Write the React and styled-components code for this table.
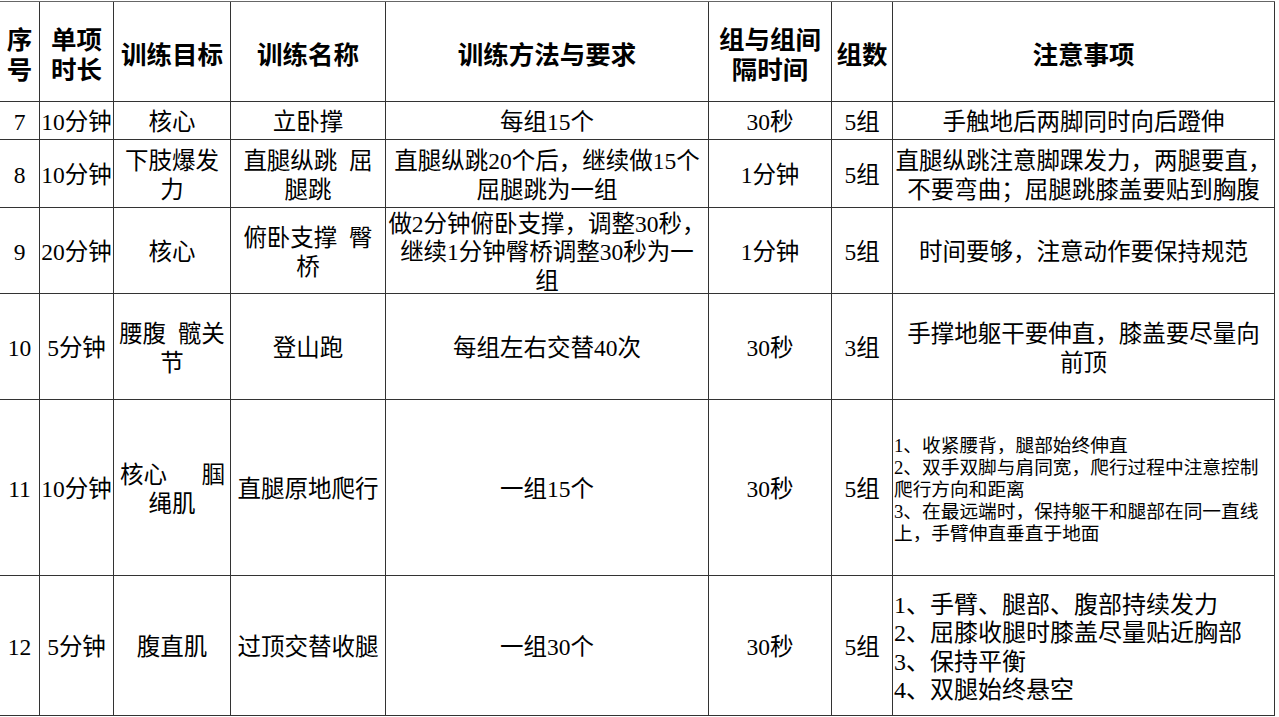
import styled, { createGlobalStyle } from "styled-components";

const GlobalStyle = createGlobalStyle`
  html, body {
    margin: 0;
    padding: 0;
    background: #fff;
  }
  body {
    font-family: "Liberation Serif", "Noto Sans CJK SC", serif;
    color: #000;
  }
`;

const Sheet = styled.div`
  display: grid;
  grid-template-columns: 40px 74px 117px 155px 323px 123px 61px 382px;
  grid-template-rows: 100px 38px 68px 86px 106px 176px 140px;
  width: 1275px;
  margin-top: 1px;
  border-top: 1px solid #666;
`;

const Cell = styled.div`
  box-sizing: border-box;
  border-right: 1px solid #333;
  border-bottom: 1px solid #333;
  display: flex;
  flex-direction: column;
  justify-content: center;
  align-items: ${(p) => (p.$left ? "flex-start" : "center")};
  text-align: ${(p) => (p.$left ? "left" : "center")};
  padding: 4px 0 0 ${(p) => (p.$left ? "1px" : "0")};
  font-size: ${(p) => p.$size || 23.5}px;
  line-height: ${(p) => p.$lh || 28.5}px;
  white-space: nowrap;
`;

const HeadCell = styled(Cell)`
  padding-top: 2px;
  font-family: "Noto Sans CJK SC", sans-serif;
  font-weight: 700;
  font-size: 25.5px;
  line-height: 30px;
`;

const Line = styled.div``;

const Spread = styled.div`
  align-self: stretch;
  display: flex;
  justify-content: space-between;
  padding: 0 5px 0 6px;
`;

const headers = [
  ["序", "号"],
  ["单项", "时长"],
  ["训练目标"],
  ["训练名称"],
  ["训练方法与要求"],
  ["组与组间", "隔时间"],
  ["组数"],
  ["注意事项"],
];

const rows = [
  {
    no: "7",
    time: "10分钟",
    target: ["核心"],
    name: ["立卧撑"],
    method: ["每组15个"],
    rest: "30秒",
    sets: "5组",
    notes: ["手触地后两脚同时向后蹬伸"],
  },
  {
    no: "8",
    time: "10分钟",
    target: ["下肢爆发", "力"],
    name: ["直腿纵跳\u2002屈", "腿跳"],
    method: ["直腿纵跳20个后，继续做15个", "屈腿跳为一组"],
    rest: "1分钟",
    sets: "5组",
    notes: ["直腿纵跳注意脚踝发力，两腿要直，", "不要弯曲；屈腿跳膝盖要贴到胸腹"],
  },
  {
    no: "9",
    time: "20分钟",
    target: ["核心"],
    name: ["俯卧支撑\u2002臀", "桥"],
    method: ["做2分钟俯卧支撑，调整30秒，", "继续1分钟臀桥调整30秒为一", "组"],
    rest: "1分钟",
    sets: "5组",
    notes: ["时间要够，注意动作要保持规范"],
  },
  {
    no: "10",
    time: "5分钟",
    target: ["腰腹\u2002髋关", "节"],
    name: ["登山跑"],
    method: ["每组左右交替40次"],
    rest: "30秒",
    sets: "3组",
    notes: ["手撑地躯干要伸直，膝盖要尽量向", "前顶"],
  },
  {
    no: "11",
    time: "10分钟",
    target: ["核心|腘", "绳肌"],
    name: ["直腿原地爬行"],
    method: ["一组15个"],
    rest: "30秒",
    sets: "5组",
    notes: [
      "1、收紧腰背，腿部始终伸直",
      "2、双手双脚与肩同宽，爬行过程中注意控制",
      "爬行方向和距离",
      "3、在最远端时，保持躯干和腿部在同一直线",
      "上，手臂伸直垂直于地面",
    ],
    left: true,
    size: 18.7,
    lh: 22,
  },
  {
    no: "12",
    time: "5分钟",
    target: ["腹直肌"],
    name: ["过顶交替收腿"],
    method: ["一组30个"],
    rest: "30秒",
    sets: "5组",
    notes: ["1、手臂、腿部、腹部持续发力", "2、屈膝收腿时膝盖尽量贴近胸部", "3、保持平衡", "4、双腿始终悬空"],
    left: true,
    size: 24,
    lh: 28.5,
  },
];

const Lines = ({ items }) =>
  items.map((t, i) =>
    t.includes("|") ? (
      <Spread key={i}>
        {t.split("|").map((s) => (
          <span key={s}>{s}</span>
        ))}
      </Spread>
    ) : (
      <Line key={i}>{t}</Line>
    )
  );

const App = () => {
  return (
    <>
      <GlobalStyle />
      <Sheet>
        {headers.map((h, i) => (
          <HeadCell key={i}>
            <Lines items={h} />
          </HeadCell>
        ))}
        {rows.map((r) => [
          <Cell key={r.no + "a"}>{r.no}</Cell>,
          <Cell key={r.no + "b"}>{r.time}</Cell>,
          <Cell key={r.no + "c"}>
            <Lines items={r.target} />
          </Cell>,
          <Cell key={r.no + "d"}>
            <Lines items={r.name} />
          </Cell>,
          <Cell key={r.no + "e"}>
            <Lines items={r.method} />
          </Cell>,
          <Cell key={r.no + "f"}>{r.rest}</Cell>,
          <Cell key={r.no + "g"}>{r.sets}</Cell>,
          <Cell key={r.no + "h"} $left={r.left} $size={r.size} $lh={r.lh}>
            <Lines items={r.notes} />
          </Cell>,
        ])}
      </Sheet>
    </>
  );
};

export default App;
